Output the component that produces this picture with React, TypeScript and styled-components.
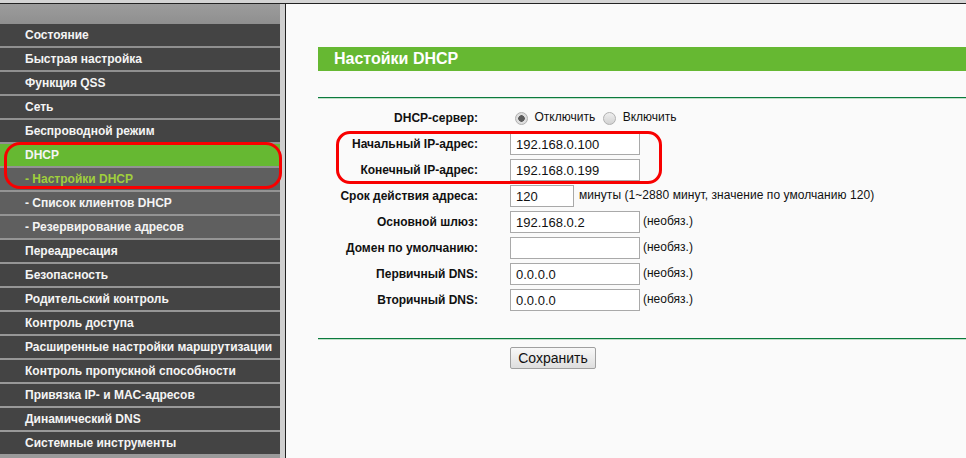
import React from "react";
import styled, { createGlobalStyle } from "styled-components";

const Global = createGlobalStyle`
  html, body { margin: 0; padding: 0; width: 966px; height: 458px; overflow: hidden; background: #fafafa; }
  * { box-sizing: border-box; }
`;

const Page = styled.div`
  width: 966px;
  height: 458px;
  display: flex;
  flex-direction: column;
  overflow: hidden;
  font-family: "Liberation Sans", Arial, sans-serif;
`;
const TopBar = styled.div`
  height: 4px;
  flex: none;
  background: #d4d4d4;
  border-bottom: 1px solid #222;
`;
const Body = styled.div`
  flex: 1;
  display: flex;
  min-height: 0;
`;
const Sidebar = styled.nav`
  width: 286px;
  flex: none;
  display: flex;
  flex-direction: column;
  background: linear-gradient(#9c9c9c, #8f8f8f 20px, #9a9a9a);
  border-right: 1px solid #222;
  box-shadow: inset -5px 0 0 #cfcfcf;
  padding: 20px 5px 0 0;
  position: relative;
`;
const MenuItem = styled.div<{ $kind: "main" | "active" | "sub" | "current" }>`
  height: 22px;
  flex: none;
  margin-bottom: 2px;
  padding-left: 25px;
  font-size: 12px;
  font-weight: bold;
  line-height: 23px;
  white-space: nowrap;
  color: ${(p) => (p.$kind === "current" ? "#a0cf3c" : "#f4f4f4")};
  background: ${(p) =>
    p.$kind === "active" ? "#66b832" : p.$kind === "main" ? "#444444" : "#5f5f5f"};
`;
const MenuHighlight = styled.div`
  position: absolute;
  left: 4px;
  top: 138px;
  width: 278px;
  height: 47px;
  border: 3px solid #f80000;
  border-radius: 16px;
  pointer-events: none;
`;
const Content = styled.main`
  flex: 1;
  background: #fafafa;
  padding: 43px 0 0 32px;
  display: flex;
  flex-direction: column;
  position: relative;
`;
const Title = styled.h1`
  margin: 0 0 26px;
  height: 24px;
  flex: none;
  padding-left: 16px;
  background: #66b832;
  color: #fff;
  font-size: 16px;
  font-weight: bold;
  line-height: 24px;
`;
const Rule = styled.div`
  height: 2px;
  flex: none;
  background: linear-gradient(#0b7a3e 50%, #bfe0c8 50%);
`;
const Form = styled.div`
  display: flex;
  flex-direction: column;
  margin-top: 6px;
  margin-bottom: 25px;
`;
const Row = styled.div`
  height: 26px;
  display: flex;
  align-items: center;
  font-size: 12px;
  color: #111;
`;
const Label = styled.label`
  width: 160px;
  flex: none;
  text-align: right;
  font-weight: bold;
  white-space: nowrap;
`;
const Field = styled.div`
  margin-left: 32px;
  display: flex;
  align-items: center;
`;
const Input = styled.input<{ $short?: boolean }>`
  width: ${(p) => (p.$short ? "64px" : "130px")};
  height: 22px;
  padding: 0 5px;
  border: 1px solid #a9a9a9;
  background: #fff;
  font: 13px "Liberation Sans", Arial, sans-serif;
  color: #111;
  outline: none;
`;
const Hint = styled.span<{ $long?: boolean }>`
  margin: 0 0 2px ${(p) => (p.$long ? "5px" : "3px")};
  letter-spacing: ${(p) => (p.$long ? "0.06px" : "0")};
  white-space: nowrap;
`;
const RadioGroup = styled.div`
  display: flex;
  align-items: center;
  padding-left: 5px;
`;
const RadioDot = styled.span<{ $on?: boolean }>`
  width: 13px;
  height: 13px;
  flex: none;
  border-radius: 50%;
  border: 1px solid #b0b0b0;
  background: ${(p) =>
    p.$on
      ? "radial-gradient(circle, #5c5c5c 0 3px, #dedede 3.5px)"
      : "linear-gradient(#eeeeee, #d2d2d2)"};
`;
const RadioText = styled.span`
  margin: 0 8px 2px 6.5px;
  white-space: nowrap;
`;
const SaveWrap = styled.div`
  padding: 7px 0 0 192px;
`;
const Save = styled.button`
  display: block;
  width: 86px;
  height: 22px;
  padding: 0;
  border: 1px solid #a0a0a0;
  border-radius: 2px;
  background: linear-gradient(#f8f8f8, #dedede);
  font: 14px "Liberation Sans", Arial, sans-serif;
  color: #111;
`;
const FormHighlight = styled.div`
  position: absolute;
  left: 50px;
  top: 127px;
  width: 326px;
  height: 53px;
  border: 3px solid #f80000;
  border-radius: 14px;
  pointer-events: none;
`;

const menu: [string, "main" | "active" | "sub" | "current"][] = [
  ["Состояние", "main"],
  ["Быстрая настройка", "main"],
  ["Функция QSS", "main"],
  ["Сеть", "main"],
  ["Беспроводной режим", "main"],
  ["DHCP", "active"],
  ["- Настройки DHCP", "current"],
  ["- Список клиентов DHCP", "sub"],
  ["- Резервирование адресов", "sub"],
  ["Переадресация", "main"],
  ["Безопасность", "main"],
  ["Родительский контроль", "main"],
  ["Контроль доступа", "main"],
  ["Расширенные настройки маршрутизации", "main"],
  ["Контроль пропускной способности", "main"],
  ["Привязка IP- и MAC-адресов", "main"],
  ["Динамический DNS", "main"],
  ["Системные инструменты", "main"],
];

const fields: [string, string, string][] = [
  ["Основной шлюз:", "192.168.0.2", "(необяз.)"],
  ["Домен по умолчанию:", "", "(необяз.)"],
  ["Первичный DNS:", "0.0.0.0", "(необяз.)"],
  ["Вторичный DNS:", "0.0.0.0", "(необяз.)"],
];

export default function App() {
  return (
    <Page>
      <Global />
      <TopBar />
      <Body>
        <Sidebar>
          {menu.map(([t, k]) => (
            <MenuItem key={t} $kind={k}>{t}</MenuItem>
          ))}
          <MenuHighlight />
        </Sidebar>
        <Content>
          <Title>Настойки DHCP</Title>
          <Rule />
          <Form>
            <Row>
              <Label>DHCP-сервер:</Label>
              <Field>
                <RadioGroup>
                  <RadioDot $on />
                  <RadioText>Отключить</RadioText>
                  <RadioDot />
                  <RadioText>Включить</RadioText>
                </RadioGroup>
              </Field>
            </Row>
            <Row>
              <Label>Начальный IP-адрес:</Label>
              <Field><Input readOnly value="192.168.0.100" /></Field>
            </Row>
            <Row>
              <Label>Конечный IP-адрес:</Label>
              <Field><Input readOnly value="192.168.0.199" /></Field>
            </Row>
            <Row>
              <Label>Срок действия адреса:</Label>
              <Field>
                <Input $short readOnly value="120" />
                <Hint $long>минуты (1~2880 минут, значение по умолчанию 120)</Hint>
              </Field>
            </Row>
            {fields.map(([l, v, h]) => (
              <Row key={l}>
                <Label>{l}</Label>
                <Field>
                  <Input readOnly value={v} />
                  <Hint>{h}</Hint>
                </Field>
              </Row>
            ))}
          </Form>
          <Rule />
          <SaveWrap><Save>Сохранить</Save></SaveWrap>
          <FormHighlight />
        </Content>
      </Body>
    </Page>
  );
}
